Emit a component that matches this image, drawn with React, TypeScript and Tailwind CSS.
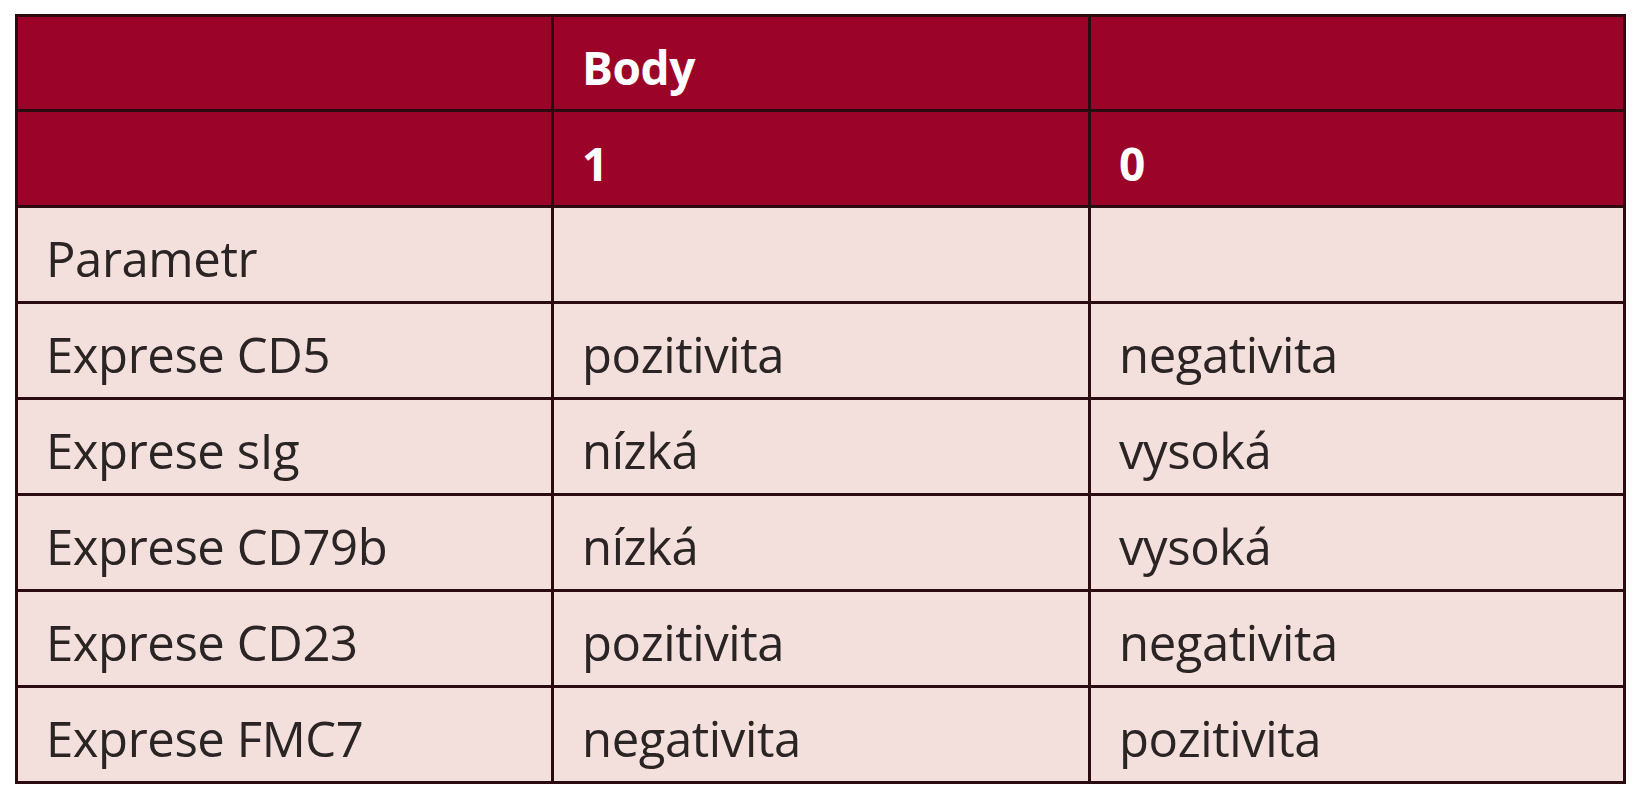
import React from "react";

const rows: [string, string, string][] = [
  ["Parametr", "", ""],
  ["Exprese CD5", "pozitivita", "negativita"],
  ["Exprese sIg", "nízká", "vysoká"],
  ["Exprese CD79b", "nízká", "vysoká"],
  ["Exprese CD23", "pozitivita", "negativita"],
  ["Exprese FMC7", "negativita", "pozitivita"],
];

export default function App() {
  return (
    <div className="w-[1642px] h-[800px] bg-white pt-[14px] pl-[15px]" style={{ fontFamily: '"Open Sans", "Liberation Sans", sans-serif' }}>
      <table className="border-collapse border-[3px] border-[#2a0b10] w-[1608px] table-fixed text-[49px] leading-none tracking-[-0.4px]">
        <colgroup>
          <col className="w-[536px]" />
          <col className="w-[537px]" />
          <col className="w-[535px]" />
        </colgroup>
        <tbody>
          <tr className="h-[95px] bg-[#9c0329] text-white font-bold">
            <td className="border-[3px] border-[#2a0b10] px-[28px] pt-[8px]"></td>
            <td className="border-[3px] border-[#2a0b10] px-[28px] pt-[8px] text-[46px]">Body</td>
            <td className="border-[3px] border-[#2a0b10] px-[28px] pt-[8px]"></td>
          </tr>
          <tr className="h-[96px] bg-[#9c0329] text-white font-bold">
            <td className="border-[3px] border-[#2a0b10] px-[28px] pt-[8px]"></td>
            <td className="border-[3px] border-[#2a0b10] px-[28px] pt-[8px] text-[46px]">1</td>
            <td className="border-[3px] border-[#2a0b10] px-[28px] pt-[8px] text-[46px]">0</td>
          </tr>
          {rows.map((r, i) => (
            <tr key={i} className="h-[96px] bg-[#f3dfdb] text-[#2a2424]">
              <td className="border-[3px] border-[#2a0b10] px-[28px] pt-[8px]">{r[0]}</td>
              <td className="border-[3px] border-[#2a0b10] px-[28px] pt-[8px]">{r[1]}</td>
              <td className="border-[3px] border-[#2a0b10] px-[28px] pt-[8px]">{r[2]}</td>
            </tr>
          ))}
        </tbody>
      </table>
    </div>
  );
}
